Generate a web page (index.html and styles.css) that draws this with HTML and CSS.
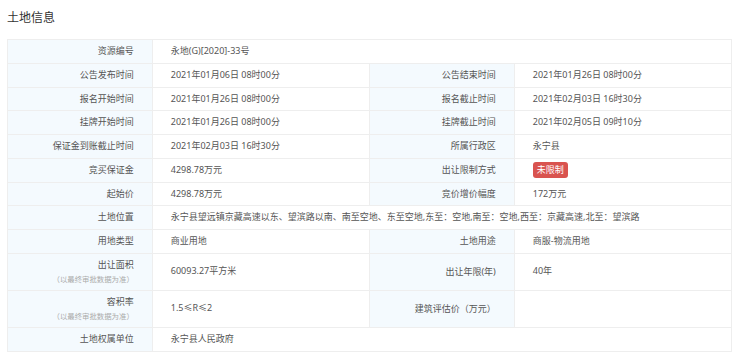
FILE: index.html
```html
<!DOCTYPE html>
<html lang="zh-CN">
<head>
    <meta charset="UTF-8">
    <meta name="viewport" content="width=device-width, initial-scale=1.0">
    <title>土地信息</title>
    <link rel="stylesheet" href="styles.css">
</head>
<body>
    <div class="land-info">
        <h2 class="section-title">土地信息</h2>

        <table class="info-table">
            <colgroup>
                <col class="col-label">
                <col class="col-value">
                <col class="col-label">
                <col class="col-value">
            </colgroup>
            <tr>
                <th>资源编号</th>
                <td colspan="3">永地(G)[2020]-33号</td>
            </tr>
            <tr>
                <th>公告发布时间</th>
                <td>2021年01月06日 08时00分</td>
                <th>公告结束时间</th>
                <td>2021年01月26日 08时00分</td>
            </tr>
            <tr>
                <th>报名开始时间</th>
                <td>2021年01月26日 08时00分</td>
                <th>报名截止时间</th>
                <td>2021年02月03日 16时30分</td>
            </tr>
            <tr>
                <th>挂牌开始时间</th>
                <td>2021年01月26日 08时00分</td>
                <th>挂牌截止时间</th>
                <td>2021年02月05日 09时10分</td>
            </tr>
            <tr>
                <th>保证金到账截止时间</th>
                <td>2021年02月03日 16时30分</td>
                <th>所属行政区</th>
                <td>永宁县</td>
            </tr>
            <tr>
                <th>竞买保证金</th>
                <td>4298.78万元</td>
                <th>出让限制方式</th>
                <td><span class="tag tag-danger">未限制</span></td>
            </tr>
            <tr>
                <th>起始价</th>
                <td>4298.78万元</td>
                <th>竞价增价幅度</th>
                <td>172万元</td>
            </tr>
            <tr>
                <th>土地位置</th>
                <td colspan="3">永宁县望远镇京藏高速以东、望滨路以南、南至空地、东至空地,东至：空地,南至：空地,西至：京藏高速,北至：望滨路</td>
            </tr>
            <tr>
                <th>用地类型</th>
                <td>商业用地</td>
                <th>土地用途</th>
                <td>商服-物流用地</td>
            </tr>
            <tr class="tall">
                <th>出让面积<span class="note">（以最终审批数据为准）</span></th>
                <td>60093.27平方米</td>
                <th>出让年限(年)</th>
                <td>40年</td>
            </tr>
            <tr class="tall">
                <th>容积率<span class="note">（以最终审批数据为准）</span></th>
                <td>1.5≤R≤2</td>
                <th>建筑评估价（万元）</th>
                <td></td>
            </tr>
            <tr>
                <th>土地权属单位</th>
                <td colspan="3">永宁县人民政府</td>
            </tr>
        </table>
    </div>
</body>
</html>
```

FILE: styles.css
```css
body {
    margin: 0;
    font-family: "Noto Sans", "Noto Sans CJK SC", sans-serif;
    background: #fff;
}
.land-info {
    padding: 0 8px 0 7px;
}
.section-title {
    margin: 0;
    padding: 10px 0 13px;
    font-size: 12px;
    line-height: 16px;
    font-weight: normal;
    color: #333;
}
.info-table {
    width: 100%;
    border-collapse: collapse;
    table-layout: fixed;
    border: 1px solid #eee;
    font-size: 9px;
}
.col-label {
    width: 20%;
}
.col-value {
    width: 30%;
}
.info-table th,
.info-table td {
    border: 1px solid #eee;
    padding: 3px 18px;
    line-height: 16.75px;
    font-weight: normal;
    white-space: nowrap;
}
.info-table th {
    background: #f4fafe;
    color: #555;
    text-align: right;
}
.info-table td {
    color: #555;
    text-align: left;
}
.tall th {
    line-height: 15px;
}
.note {
    display: block;
    font-size: 7.4px;
    color: #aaa;
}
.tag {
    display: inline-block;
    padding: 0 4px;
    height: 16px;
    line-height: 16px;
    border-radius: 3px;
    vertical-align: middle;
}
.tag-danger {
    background: #d9534f;
    color: #fff;
}
```
